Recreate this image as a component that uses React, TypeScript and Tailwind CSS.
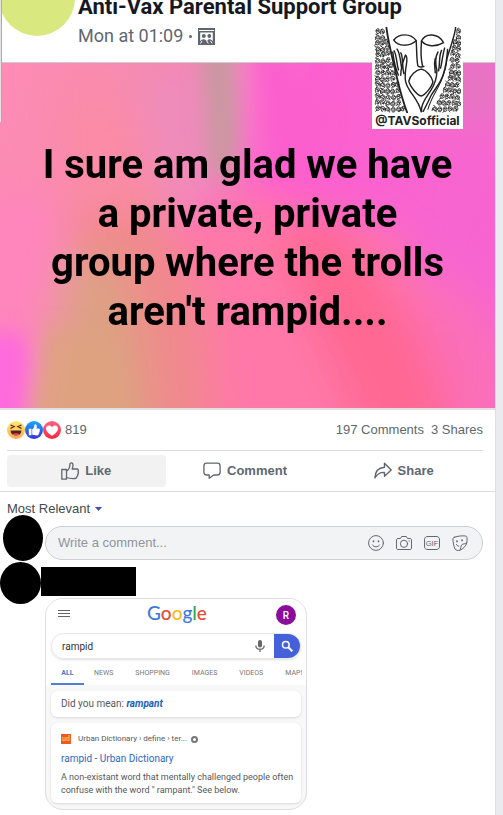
import { useState } from 'react';

const leftCrowd = [
  [374, 84], [388, 86], [374, 101], [388, 103], [399, 114], [373, 118], [386, 121], [374, 136], [389, 138], [402, 131],
  [374, 153], [389, 155], [404, 150], [374, 171], [389, 173], [405, 170], [373, 189], [388, 190], [403, 190], [414, 184],
  [374, 206], [389, 208], [404, 209], [418, 207], [373, 224], [388, 226], [403, 227], [419, 226], [374, 242], [389, 243],
  [404, 245], [420, 244], [432, 242], [373, 260], [388, 261], [403, 262], [418, 263], [434, 260], [374, 278], [389, 279],
  [405, 280], [421, 281], [436, 280], [373, 296], [388, 297], [404, 298], [420, 299], [437, 298], [374, 314], [389, 316],
  [404, 316], [420, 317], [436, 316], [449, 315],
];

const rightCrowd = [
  [616, 84], [615, 101], [605, 115], [616, 119], [602, 133], [616, 137], [599, 150], [614, 155], [596, 168], [611, 172],
  [598, 188], [614, 190], [594, 205], [606, 207], [616, 208], [590, 223], [602, 225], [616, 226], [583, 241], [596, 243],
  [611, 244], [576, 260], [589, 261], [604, 262], [617, 262], [566, 278], [580, 279], [596, 280], [612, 281], [557, 296],
  [570, 297], [586, 298], [602, 299], [616, 300], [545, 315], [559, 316], [575, 317], [591, 317], [607, 317],
];

const facePaths = [
  'M12 3C6-1 1 4 2 10s8 8 11 2M5 6c2-1 3 1 2 2s-3 1-2-2M10 6l3 1M9 8l1 4M0 17l5-3',
  'M1 12c1-11 10-13 12-4s-4 11-9 8M4 8c1-2 3-1 3 1M9 7l3 1M4 13c3 2 5 1 7-1',
  'M1 1c3 4 10 1 12 6s-3 10-8 7-4-8 1-8 5 4 2 5M12 13l2 4M1 9v8',
  'M3 16C-1 8 3 1 9 2s6 10 1 12M5 7h3M10 8v3M1 4l4-4M6 12l4-1',
];

function Emblem() {
  return (
    <svg viewBox="370 80 260 258" className="w-full" fill="none" stroke="#222" strokeLinecap="round" strokeLinejoin="round" aria-hidden="true">
      <g strokeWidth="2.700">
        {[...leftCrowd, ...rightCrowd].map(([x, y], i) => (
          <path key={i} d={facePaths[(i * 7 + (i >> 2)) % 4]} transform={`translate(${x} ${y}) rotate(${((i * 5) % 7) * 6 - 18} 7 8)`} />
        ))}
      </g>
      <g strokeWidth="4.300">
        <path d="M407 82c5 38 14 76 24 117 8 36 22 96 38 136" strokeWidth="5.500" />
        <path d="M614 82c-5 35-19 65-27 96" />
        <path d="M429 119c16-20 51-22 67 2-20 18-53 18-67-2z" />
        <path d="M512 122c11-26 51-24 66 5-22 13-51 13-66-5z" />
        <path d="M496 121c2 24 1 56 5 75 3 4 13 5 18 2M512 122c-2 22-3 50 3 74" />
        <path d="M511 206c-15 2-34 19-37 36 3 15 25 42 37 44 13-3 33-29 35-43-3-15-20-35-35-37z" />
        <path d="M426 155c3 24 8 49 17 69M430 151c8 14 7 36 13 57M439 146c9 12 10 35 13 54M450 157c8 13 3 35 9 62M450 224c0-20 6-39 14-60 9 6 3 24 1 40-5 37 0 48 12 66 13 20 28 35 34 63" />
        <path d="M590 147c-2 28-5 52-13 74-8 28-25 43-36 63-9 18-14 30-24 48M581 143c-6 22-8 42-12 60M572 150c-9 18-4 36-9 61M561 155c-10 18-7 39-3 55 0 26-8 44-19 61-13 20-23 29-27 52v10M553 174c-5 17 0 29 0 43" />
        <path d="M588 180c-4 29-13 56-28 83-10 18-21 36-29 63" strokeWidth="3" />
      </g>
    </svg>
  );
}

function PostBackdrop() {
  return (
    <svg viewBox="0 0 495 345" preserveAspectRatio="none" className="absolute inset-0 size-full" aria-hidden="true">
      <defs>
        <linearGradient id="base" x1="0" x2="1" y1="0" y2="0.25">
          <stop offset="0" stopColor="#ff8cb4" />
          <stop offset="0.3" stopColor="#f58ab0" />
          <stop offset="0.45" stopColor="#f783c4" />
          <stop offset="0.6" stopColor="#fd5fd0" />
          <stop offset="1" stopColor="#f766d0" />
        </linearGradient>
        <filter id="soft" x="-50%" y="-50%" width="200%" height="200%">
          <feGaussianBlur stdDeviation="20" />
        </filter>
        <filter id="softer" x="-50%" y="-50%" width="200%" height="200%">
          <feGaussianBlur stdDeviation="10" />
        </filter>
      </defs>
      <rect width="495" height="345" fill="url(#base)" />
      <g filter="url(#soft)">
        <path d="M-20 130h70l20 60-30 180h-80z" fill="#ff85bd" />
        <path d="M60 25l90 0 30 80-40 80-80-20z" fill="#fb8ba6" />
        <path d="M130 30l60-30 40 100-60 50z" fill="#ee8cbb" />
        <path d="M240 125l150 45 90 120v90H200l-80-190z" fill="#ff78a8" />
        <path d="M275 165l60-10 130 170-10 50h-90l-60-130z" fill="#ff6892" />
        <path d="M75 150l80-10 50 100 10 150H30z" fill="#f0898c" />
        <path d="M400 210l110 30v140h-50z" fill="#fb6fb8" />
        <path d="M440-10h70v70h-60z" fill="#e477c0" />
        <path d="M475 120h40v150h-30z" fill="#f862d2" />
        <path d="M66 190l55 5 20 80 10 110H26z" fill="#dda184" />
      </g>
      <g filter="url(#softer)">
        <path d="M200-15h34l4 90-10 50-18-20z" fill="#c8999f" />
        <path d="M254-15h24l50 70-20 60-40-40z" fill="#fb5fcd" />
        <path d="M48 265l70 10 20 100H28z" fill="#dfa280" opacity="0.8" />
        <path d="M-20 270l44 0 6 30-10 80h-44z" fill="#fd6bdc" />
      </g>
    </svg>
  );
}

function GroupIcon() {
  return (
    <svg viewBox="0 0 17 17" className="w-[17px] h-[17px]" aria-hidden="true">
      <path d="M0 0h17v17H0z" fill="#606570" />
      <path d="M1 2.500h15" stroke="#fff" strokeWidth="1" />
      <path d="M2.200 4.500h12.600v8.500H2.200z" fill="#fff" />
      <circle cx="5.800" cy="8" r="2" fill="#606570" />
      <circle cx="11.300" cy="8" r="1.900" fill="#606570" />
      <path d="M2 15c0-5 7.300-5 7.300 0zM9.300 12.500c1.500-2.300 5-1.500 5.700 1.500l-4 1z" fill="#606570" />
      <path d="M2.500 15.500l1.500-2.500M8.500 12.500l1.800 3M12.500 12.800l1.600 2.500" stroke="#fff" />
    </svg>
  );
}

function Reactions() {
  return (
    <svg viewBox="0 0 54 18" className="w-[54px] h-[18px]" role="img" aria-label="Haha, Like and Love">
      <defs>
        <linearGradient id="haha" x1="0" x2="0" y1="0" y2="1">
          <stop offset="0" stopColor="#feea70" />
          <stop offset="1" stopColor="#ffac50" />
        </linearGradient>
        <linearGradient id="like" x1="0" x2="0" y1="0" y2="1">
          <stop offset="0" stopColor="#17aafc" />
          <stop offset="1" stopColor="#3a2ee5" />
        </linearGradient>
        <linearGradient id="love" x1="0" x2="0" y1="0" y2="1">
          <stop offset="0" stopColor="#ff6680" />
          <stop offset="1" stopColor="#f92840" />
        </linearGradient>
      </defs>
      <circle cx="45" cy="9" r="9" fill="url(#love)" />
      <path d="M45 14.800C42 12.800 39 10.500 39 7.500c0-3.300 4.400-4.300 6-1.200 1.600-3.100 6-2.100 6 1.200 0 3-3 5.300-6 7.300z" fill="#fff" />
      <circle cx="27" cy="9" r="9" fill="url(#like)" />
      <path d="M21.800 7.800h2.700v6.500h-2.700zM25.200 8.300c1.600-1 2.200-2.600 2.200-4.400 0-1 2.400-.8 2.400 1.500 0 .8-.2 1.400-.4 2h2.300c1.400 0 1.600 1.400.8 1.900.6.6.4 1.500-.3 1.800.4.7.1 1.400-.5 1.600.1 1-.5 1.700-1.700 1.700-1.800 0-3.500-.1-4.800-.8z" fill="#fff" />
      <circle cx="9" cy="9" r="9" fill="url(#haha)" />
      <path d="M3.500 9.500h11c-.2 3.300-2.500 5-5.500 5s-5.300-1.700-5.500-5z" fill="#50261a" />
      <path d="M5.500 13.300c1.500-1.500 5.500-1.500 7 0-1 .8-2.200 1.200-3.500 1.200s-2.500-.4-3.500-1.200z" fill="#f4405e" />
      <path d="M3.500 4l3.600 1.500L3.500 7.500M14.500 4l-3.600 1.500 3.600 2" fill="none" stroke="#50261a" strokeWidth="1.300" />
    </svg>
  );
}

const lineIcon = {
  fill: 'none',
  stroke: '#606770',
  strokeLinecap: 'round',
  strokeLinejoin: 'round',
  'aria-hidden': true,
} as const;

function LikeIcon() {
  return (
    <svg viewBox="0 0 18 18" className="w-[18px] h-[18px]" {...lineIcon} strokeWidth="1.300">
      <path d="M.8 7.500h4.700v9.700H.8z" />
      <path d="M5.500 9c2.700-1.400 3.300-3.800 3.400-6.500 0-2 3.100-2.400 3.100.8 0 1.500-.4 2.700-.9 3.700h4.700c1.500 0 2 1.600 1.200 2.600.7 1 .5 2-.3 2.600.3 1-.1 1.800-.8 2.200.1 1.400-.6 2-1.900 2.100-3.300.2-6.100 0-8.500-1" />
    </svg>
  );
}

function CommentIcon() {
  return (
    <svg viewBox="0 0 18 18" className="w-[18px] h-[18px]" {...lineIcon} strokeWidth="1.300">
      <path d="M3.700 1.200h10.600c1.800 0 2.800 1 2.800 2.700v6.400c0 1.700-1 2.700-2.800 2.700h-3.600l-4.500 3.300V13H3.700C1.900 13 .9 12 .9 10.300V3.900c0-1.700 1-2.700 2.800-2.700z" />
    </svg>
  );
}

function ShareIcon() {
  return (
    <svg viewBox="0 0 18 18" className="w-[18px] h-[18px]" {...lineIcon} strokeWidth="1.400">
      <path d="M10.500 1.300l6.700 6.600-6.700 6.300v-3.800c-4.700-.2-7.200 1.300-9.600 5.600.2-6.500 3.700-10.200 9.600-10.700z" />
    </svg>
  );
}

function SmileIcon() {
  return (
    <svg viewBox="0 0 16 16" className="size-4" {...lineIcon}>
      <circle cx="8" cy="8" r="7.400" />
      <path d="M4.500 10c1.200 2.600 5.800 2.600 7 0" />
      <path d="M5.500 6v.4M10.500 6v.4" strokeWidth="1.700" />
    </svg>
  );
}

function CameraIcon() {
  return (
    <svg viewBox="0 0 16 16" className="size-4" {...lineIcon}>
      <path d="M2 3.500h2.500l1.200-2h4.600l1.200 2H14c1 0 1.500.5 1.500 1.500v8c0 1-.5 1.500-1.500 1.500H2c-1 0-1.500-.5-1.500-1.500V5C.5 4 1 3.500 2 3.500z" />
      <circle cx="8" cy="8.800" r="3.600" />
      <path d="M13 6h.3" />
    </svg>
  );
}

function GifIcon() {
  return (
    <svg viewBox="0 0 16 16" className="size-4" {...lineIcon}>
      <path d="M4 1.500h8c2.500 0 3.500 1 3.500 3.500v6c0 2.500-1 3.500-3.500 3.500H4C1.500 14.500.5 13.500.5 11V5c0-2.500 1-3.500 3.500-3.500z" />
      <text x="8" y="10.700" textAnchor="middle" fontSize="7.500" fill="#606770" stroke="none">GIF</text>
    </svg>
  );
}

function StickerIcon() {
  return (
    <svg viewBox="0 0 16 16" className="size-4" {...lineIcon}>
      <path d="M2.500 2.200C6 1 10 .6 13.500 1c1 .1 1.400.7 1.500 1.600.1 2 .1 3.500-.2 5.200-.8 3.300-3.800 6.200-7 7.500-1.500.3-4.200.2-4.800-1.300C1.700 11 1 7 .9 4c0-1 .6-1.500 1.600-1.800z" />
      <path d="M7.800 15.300c1.400-1.300.6-3.800 1.900-5.400 1.300-1.500 3.500-.5 5.100-2.100" />
      <path d="M5 6v.4M10 5v.4" strokeWidth="1.700" />
      <path d="M4.500 9.500c.6 1.200 1.300 1.700 2.300 1.700" />
    </svg>
  );
}

const composerTools = [
  { label: 'Insert an emoji', Icon: SmileIcon },
  { label: 'Attach a photo or video', Icon: CameraIcon },
  { label: 'Post a GIF', Icon: GifIcon },
  { label: 'Post a sticker', Icon: StickerIcon },
];

const actions = [
  { label: 'Like', Icon: LikeIcon },
  { label: 'Comment', Icon: CommentIcon },
  { label: 'Share', Icon: ShareIcon },
];

const tabs = ['NEWS', 'SHOPPING', 'IMAGES', 'VIDEOS', 'MAPS'];

function SearchCard() {
  return (
    <div className="w-[262px] max-w-full overflow-hidden rounded-[18px] border border-[#dadde1] bg-[#f8f8f9] font-[Roboto,sans-serif] text-[#55585c]">
      <div className="bg-white">
        <div className="flex h-8 items-center justify-between pl-3 pr-[10px]">
          <button aria-label="Menu" className="mb-1 flex w-5 flex-col gap-[2px] pr-2">
            <span className="h-px w-full bg-[#666]" />
            <span className="h-px w-full bg-[#666]" />
            <span className="h-px w-full bg-[#666]" />
          </button>
          <div className="mb-1 font-[Lato,sans-serif] text-[19px] leading-6 font-medium">
            <span className="text-[#4078e0]">G</span>
            <span className="text-[#e5483c]">o</span>
            <span className="text-[#f5bd1c]">o</span>
            <span className="text-[#4078e0]">g</span>
            <span className="text-[#35a456]">l</span>
            <span className="text-[#e5483c]">e</span>
          </div>
          <div className="flex size-5 items-center justify-center rounded-full bg-[#8a0d9c] text-[10px] font-medium text-white">R</div>
        </div>
        <div className="mx-[5px] mt-[2px] flex h-[26px] overflow-hidden rounded-full border border-[#e6e7ea] shadow-sm">
          <input aria-label="Search" defaultValue="rampid" className="min-w-0 flex-1 pl-[10px] text-[10px] text-[#333] outline-none" />
          <button aria-label="Search by voice" className="w-7">
            <svg viewBox="0 0 12 14" className="mx-auto h-[14px] w-3" fill="none" stroke="#777" aria-hidden="true">
              <rect x="4" y="1" width="4" height="7.500" rx="2" fill="#666" stroke="none" />
              <path d="M1.800 6.500c.2 5 8.200 5 8.400 0M6 10.300V13" strokeWidth="1.400" />
            </svg>
          </button>
          <button aria-label="Google Search" className="w-[26px] bg-[#4560db]">
            <svg viewBox="0 0 12 12" className="mx-auto size-3" fill="none" stroke="#fff" strokeWidth="1.500" aria-hidden="true">
              <circle cx="4.800" cy="4.800" r="3.300" />
              <path d="M7.300 7.300l4 4" strokeWidth="2" />
            </svg>
          </button>
        </div>
        <nav className="mr-1 ml-[5px] flex h-[26px] overflow-hidden text-[7px] text-[#777]">
          <a href="#all" className="flex w-[33px] shrink-0 items-center justify-center border-b-2 border-[#4d80d0] pt-1 font-bold text-[#3f78d8]">ALL</a>
          <div className="flex items-center gap-[22px] pt-[2px] pl-[10px]">
            {tabs.map((tab) => (
              <a key={tab} href={`#${tab.toLowerCase()}`}>{tab}</a>
            ))}
          </div>
        </nav>
      </div>

      <div className="flex flex-col gap-[6px] px-[5px] py-[6px]">
        <p className="rounded-md bg-white px-[10px] py-[5px] text-[10px] leading-4 shadow">
          Did you mean: <a href="#rampant" className="font-bold text-[#2260bd] italic">rampant</a>
        </p>
        <div className="rounded-md bg-white px-[10px] pt-[10px] pb-[6px] shadow">
          <div className="flex items-center text-[8px] leading-3">
            <span className="flex size-[10px] items-center justify-center bg-[#f05a22] text-[7px] font-bold text-[#ffc04d]">ud</span>
            <span className="ml-[7px] whitespace-nowrap">Urban Dictionary › define › ter...</span>
            <span className="ml-1 size-[7px] rounded-full border-2 border-[#777]" />
          </div>
          <a href="#result" className="mt-[6px] block text-[10px] leading-4 text-[#2f67c0]">rampid - Urban Dictionary</a>
          <p className="mt-1 text-[9px] leading-[13px] whitespace-nowrap">
            A non-existant word that mentally challenged people often
            <br />
            confuse with the word " rampant." See below.
          </p>
        </div>
      </div>
    </div>
  );
}

export default function App() {
  const [comment, setComment] = useState('');

  return (
    <div className="min-h-screen bg-[#e9ebee] pr-[7px] font-['Liberation_Sans',Arial,sans-serif]">
      <main className="relative min-h-screen overflow-hidden border-r border-[#dddfe2] bg-white pb-[5px] text-[13px] text-[#606770]">
        {/* Shared picture */}
        <div className="absolute left-0 top-0 z-10 h-[122px] w-[2px] border-r border-[#aaa] bg-[#e4e4e4]" />
        <section className="relative font-[Roboto,sans-serif]">
          <header className="flex h-[63px] border-b border-[#ccc]">
            <div className="-mt-10 -ml-px size-[76px] shrink-0 rounded-full bg-[#d9e87f]" />
            <div className="-mt-[7px] ml-[3px] whitespace-nowrap">
              <h1 className="text-[22px] leading-7 font-bold text-[#17181f]">Anti-Vax Parental Support Group</h1>
              <p className="mt-[3px] flex items-center gap-[6px] text-[18px] leading-6">
                Mon at 01:09 <span className="size-[3px] rounded-full bg-[#606770]" /> <GroupIcon />
              </p>
            </div>
          </header>
          <div className="relative border-b-2 border-[#e4dfe2] pt-[77px] pb-[72px]">
            <PostBackdrop />
            <p className="relative text-center text-[40px] leading-[49px] font-bold text-black">
              I sure am glad we have
              <br />
              a private, private
              <br />
              group where the trolls
              <br />
              aren't rampid....
            </p>
          </div>
          <div className="absolute top-[26px] right-8 w-[91px] bg-white px-[2px] pt-px text-center">
            <Emblem />
            <p className="-mx-1 font-[Inter,sans-serif] text-[12px] leading-4 font-bold whitespace-nowrap text-[#222]">@TAVSofficial</p>
          </div>
        </section>

        {/* Reactions and actions */}
        <section className="border-b border-[#dadde1]">
          <div className="mr-3 ml-[7px] flex h-[41px] items-center border-b border-[#dadde1]">
            <Reactions />
            <span className="ml-1">819</span>
            <a href="#comments" className="mr-[7px] ml-auto">197 Comments</a>
            <a href="#shares">3 Shares</a>
          </div>
          <div className="my-1 mr-3 ml-[7px] grid grid-cols-3 font-bold">
            {actions.map(({ label, Icon }, i) => (
              <button
                key={label}
                className={`flex h-8 items-center justify-center gap-[6px] rounded-sm ${i === 0 ? 'bg-[#f2f2f2]' : 'bg-white'}`}
              >
                <Icon />
                {label}
              </button>
            ))}
          </div>
        </section>

        {/* Comments */}
        <section id="comments">
          <button className="ml-[7px] flex items-center gap-[5px] pt-[9px] leading-4 text-[#444950]">
            Most Relevant
            <svg viewBox="0 0 7 4" className="h-1 w-[7px]" aria-hidden="true">
              <path d="M0 0h7L3.500 4z" fill="#4050b0" />
            </svg>
          </button>
          <div className="-mt-[2px] flex items-end pr-3 pl-[3px]">
            <div className="h-[46px] w-10 shrink-0 rounded-[50%] bg-black" />
            <div className="mb-px ml-[2px] flex h-[34px] flex-1 items-center rounded-full border border-[#ccd0d5] bg-[#f2f3f5] pr-[14px] pl-3">
              <input
                type="text"
                aria-label="Write a comment"
                placeholder="Write a comment..."
                value={comment}
                onChange={(e) => setComment(e.target.value)}
                className="min-w-0 flex-1 bg-transparent outline-none placeholder:text-[#90949c]"
              />
              <div className="flex gap-3">
                {composerTools.map(({ label, Icon }) => (
                  <button key={label} aria-label={label}>
                    <Icon />
                  </button>
                ))}
              </div>
            </div>
          </div>
          <div className="mt-px flex items-start">
            <div className="h-[42px] w-[41px] shrink-0 rounded-[50%] bg-black" />
            <div className="min-w-0 flex-1 pt-[5px]">
              <div className="h-[29px] w-[95px] bg-black" />
              <div className="mt-[2px] ml-1">
                <SearchCard />
              </div>
            </div>
          </div>
        </section>
      </main>
    </div>
  );
}
